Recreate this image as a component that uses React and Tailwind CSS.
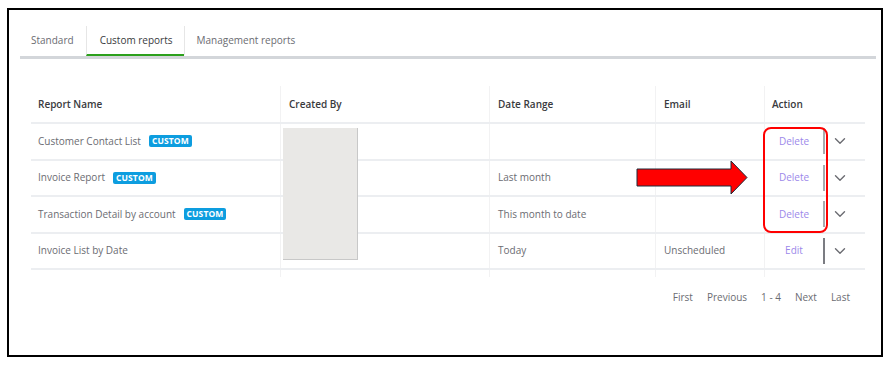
import React from "react";

const COLS = "grid grid-cols-[249px_209px_166px_109px_101px]";

const rows = [
  { name: "Customer Contact List", custom: true, range: "", email: "", action: "Delete" },
  { name: "Invoice Report", custom: true, range: "Last month", email: "", action: "Delete" },
  { name: "Transaction Detail by account", custom: true, range: "This month to date", email: "", action: "Delete" },
  { name: "Invoice List by Date", custom: false, range: "Today", email: "Unscheduled", action: "Edit" },
];

function Chevron() {
  return (
    <svg width="12" height="8" viewBox="0 0 12 8" className="block">
      <path d="M1.5 1.8 L6 6.2 L10.5 1.8" fill="none" stroke="#6b6c72" strokeWidth="1.4" strokeLinecap="round" strokeLinejoin="round" />
    </svg>
  );
}

function Badge() {
  return (
    <span className="ml-[8px] inline-block bg-[#0d9ddf] text-white font-bold text-[8.5px] leading-[12px] h-[12px] px-[3px] rounded-[2px] tracking-[0.1px]">
      CUSTOM
    </span>
  );
}

export default function App() {
  return (
    <div className="relative w-[893px] h-[367px] bg-white pt-[8px] pl-[7px] font-['Open_Sans',sans-serif]">
      <div className="w-[876px] h-[349px] border-2 border-black pt-[16px] pl-[11px]">
        {/* Tabs */}
        <div className="flex h-[30px] text-[10px]">
          <div className="flex items-center pl-[11px] pr-[12px] border-b-2 border-transparent text-[#6b6c72]">Standard</div>
          <div className="flex items-center pl-[13px] pr-[11px] border-b-2 border-[#2ca01c] border-l border-l-[#e6e6e6] text-[#393a3d]">Custom reports</div>
          <div className="flex items-center pl-[12px] pr-[13px] border-b-2 border-transparent border-l border-l-[#e6e6e6] text-[#6b6c72]">Management reports</div>
        </div>
        <div className="w-[856px] h-[3px] bg-[#d3d6da]" />

        {/* Table */}
        <div className="mt-[27px] ml-[11px] w-[834px] text-[10px]">
          <div className={`${COLS} h-[38px] border-b-2 border-[#eceef1] text-[#393a3d] font-semibold`}>
            <div className="flex items-center pl-[7px]">Report Name</div>
            <div className="flex items-center pl-[8px] border-l border-[#f2f2f3]">Created By</div>
            <div className="flex items-center pl-[8px] border-l border-[#f2f2f3]">Date Range</div>
            <div className="flex items-center pl-[8px] border-l border-[#f2f2f3]">Email</div>
            <div className="flex items-center pl-[7px] border-l border-[#f2f2f3]">Action</div>
          </div>
          {rows.map((r, i) => (
            <div key={i} className={`${COLS} h-[36.5px] border-b-2 border-[#eceef1] text-[#6b6c72]`}>
              <div className="flex items-center pl-[7px]">
                <span>{r.name}</span>
                {r.custom && <Badge />}
              </div>
              <div className="border-l border-[#f2f2f3]" />
              <div className="flex items-center pl-[8px] border-l border-[#f2f2f3]">{r.range}</div>
              <div className="flex items-center pl-[8px] border-l border-[#f2f2f3]">{r.email}</div>
              <div className="flex items-center border-l border-[#f2f2f3]">
                <div className="w-[58px] text-center text-[#9c88ea]">{r.action}</div>
                <div className={`w-[2px] h-[26px] ${i === 3 ? "bg-[#7b7c82]" : "bg-[#a9aaae]"}`} />
                <div className="ml-[9px]"><Chevron /></div>
              </div>
            </div>
          ))}
          <div className={`${COLS} h-[7px]`}>
            <div />
            <div className="border-l border-[#f2f2f3]" />
            <div className="border-l border-[#f2f2f3]" />
            <div className="border-l border-[#f2f2f3]" />
            <div className="border-l border-[#f2f2f3]" />
          </div>
          <div className="mt-[13px] h-[14px] flex justify-end items-center gap-[14px] pr-[15px] text-[10px] text-[#6b6c72]">
            <span>First</span>
            <span>Previous</span>
            <span>1 - 4</span>
            <span>Next</span>
            <span>Last</span>
          </div>
        </div>
      </div>

      {/* Redaction box */}
      <div className="absolute left-[283px] top-[128px] w-[75px] h-[132px] bg-[#e9e8e6] border-r border-b border-[#c8c8c8]" />

      {/* Red highlight box */}
      <div className="absolute left-[763px] top-[127px] w-[65px] h-[106px] border-2 border-[#ff0000] rounded-[8px]" />

      {/* Arrow */}
      <svg className="absolute left-[636px] top-[160px]" width="113" height="35" viewBox="0 0 113 35">
        <polygon points="1,9 95,9 95,1 111,17.5 95,34 95,26 1,26" fill="#ff0000" stroke="#1c2b3b" strokeWidth="1" />
      </svg>
    </div>
  );
}
